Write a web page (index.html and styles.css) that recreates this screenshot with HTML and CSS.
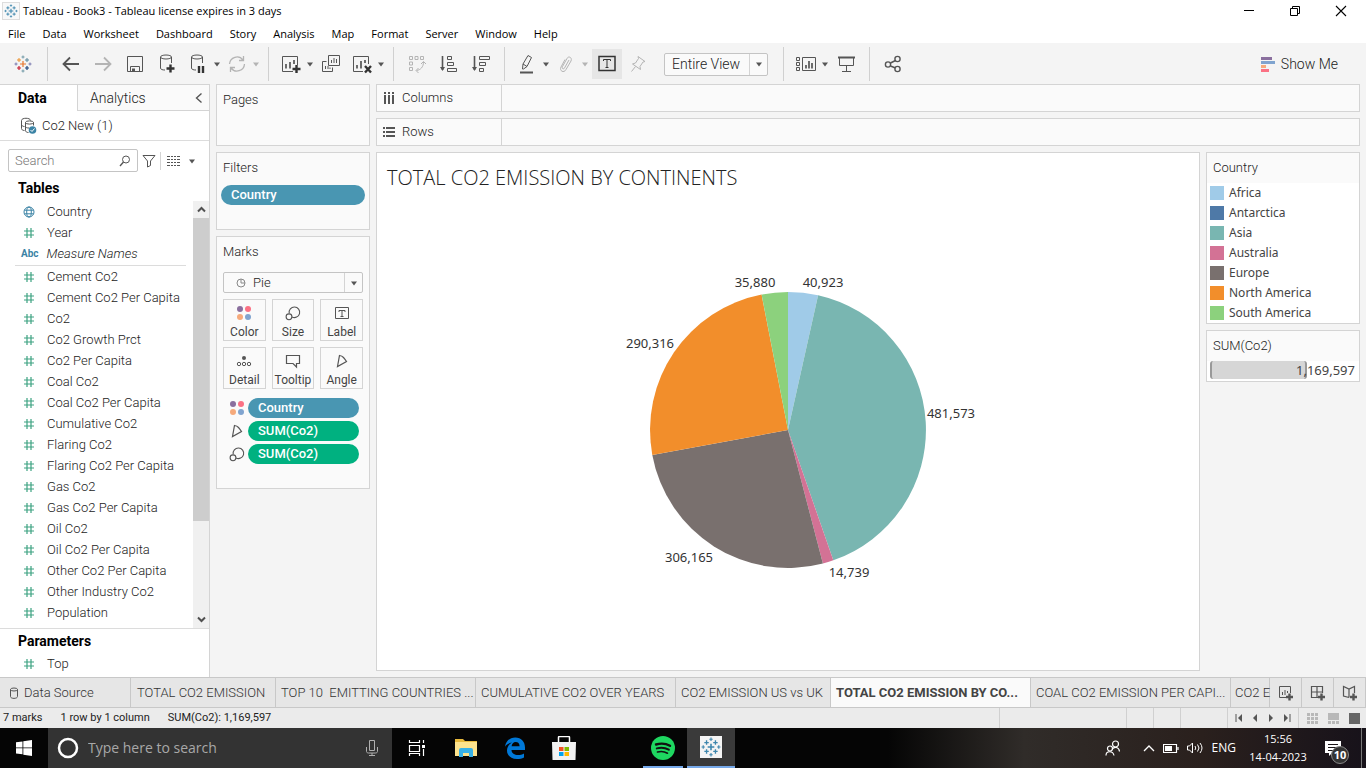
FILE: index.html
```
<!DOCTYPE html>
<html lang="en">
<head>
<meta charset="utf-8">
<title>Tableau - Book3</title>
<link rel="stylesheet" href="styles.css">
</head>
<body>
<svg class="sprite" aria-hidden="true">
  <symbol id="caret" viewBox="0 0 8 8"><path d="M1 2.5h6L4 6.5z" fill="currentColor"/></symbol>
  <symbol id="hash" viewBox="0 0 12 12"><path d="M4 1v10M8 1v10M1 4h10M1 8h10" fill="none" stroke="#3da281" stroke-width="1.2"/></symbol>
  <symbol id="logo" viewBox="0 0 18 18">
    <path d="M9 6v6M6 9h6" stroke="#e8762d" stroke-width="1.2"/>
    <path d="M5 3v4M3 5h4" stroke="#eb912c"/>
    <path d="M13 3v4M11 5h4" stroke="#5b879b"/>
    <path d="M5 11v4M3 13h4" stroke="#c72035" stroke-width="1.2"/>
    <path d="M13 11v4M11 13h4" stroke="#1f457e" stroke-width="1.2"/>
    <path d="M9 .5v3M7.500 2h3M9 14.500v3M7.500 16h3" stroke="#7199a6"/>
    <path d="M2 7.500v3M.5 9h3M16 7.500v3M14.500 9h3" stroke="#7a7ab0"/>
  </symbol>
  <symbol id="logo-blue" viewBox="0 0 18 18">
    <g stroke="#3d86ad"><path d="M9 6v6M6 9h6" stroke-width="1.4"/>
    <path d="M5 3v4M3 5h4M13 3v4M11 5h4M5 11v4M3 13h4M13 11v4M11 13h4" stroke-width="1.2"/>
    <path d="M9 .5v3M7.500 2h3M9 14.500v3M7.500 16h3M2 7.500v3M.5 9h3M16 7.500v3M14.500 9h3"/></g>
  </symbol>
  <symbol id="dots" viewBox="0 0 16 16"><circle cx="4" cy="4" r="3" fill="#8a6f9e"/><circle cx="12" cy="4" r="3" fill="#fb7184"/><circle cx="4" cy="12" r="3" fill="#f6aa7c"/><circle cx="12" cy="12" r="3" fill="#80a4cf"/></symbol>
  <symbol id="size" viewBox="0 0 16 16"><g fill="none" stroke="#555" stroke-width="1.1"><path d="M4.200 8.300A5.300 5.300 0 1 1 7 12"/><circle cx="4" cy="11.800" r="2.900"/></g></symbol>
  <symbol id="angle" viewBox="0 0 16 16"><path d="M3.500 13.500L5.500 2.500Q8 2.800 9.500 4.500T12.500 8.500z" fill="none" stroke="#555" stroke-width="1.2"/></symbol>
  <symbol id="letter" viewBox="0 0 16 16"><path d="M1.500 2.500h13v11h-13z" fill="none" stroke="#555"/><path d="M5 7V5.500h6V7M8 5.500v6M6.500 11.500h3" fill="none" stroke="#555"/></symbol>
</svg>

<header class="titlebar">
  <span class="app-icon"><svg width="14" height="14"><use href="#logo-blue"/></svg></span>
  <h1 class="window-title">Tableau - Book3 - Tableau license expires in 3 days</h1>
  <div class="window-buttons">
    <button aria-label="Minimize"><svg width="12" height="12" viewBox="0 0 12 12"><path d="M1 5.500h10" stroke="#000"/></svg></button>
    <button aria-label="Restore"><svg width="12" height="12" viewBox="0 0 12 12"><path d="M1.500 3.500h7v7h-7zM3.500 3.500v-2h7v7h-2" fill="none" stroke="#000"/></svg></button>
    <button aria-label="Close"><svg width="12" height="12" viewBox="0 0 12 12"><path d="M1 1l10 10M11 1L1 11" stroke="#000" stroke-width="1.1"/></svg></button>
  </div>
</header>

<nav class="menubar">
  <button>File</button><button>Data</button><button>Worksheet</button><button>Dashboard</button><button>Story</button><button>Analysis</button><button>Map</button><button>Format</button><button>Server</button><button>Window</button><button>Help</button>
</nav>

<div class="toolbar">
  <button class="tool start-page" aria-label="Start page"><svg width="18" height="18"><use href="#logo"/></svg></button>
  <i class="sep"></i>
  <button class="tool" aria-label="Undo"><svg viewBox="0 0 22 22"><path d="M19 11H4M10 4.500L3.500 11l6.500 6.500" stroke-width="1.800"/></svg></button>
  <button class="tool faded" aria-label="Redo"><svg viewBox="0 0 22 22"><path d="M3 11h15M12 4.500l6.500 6.500-6.500 6.500" stroke-width="1.800"/></svg></button>
  <button class="tool" aria-label="Save"><svg viewBox="0 0 22 22"><path d="M3.500 3.500h15v15h-15zM6.500 18.500v-5h9v5"/><path d="M8 15.500h3v3H8z" fill="currentColor" stroke="none"/></svg></button>
  <button class="tool" aria-label="New data source"><svg viewBox="0 0 22 22"><path d="M4.500 4v11c0 1.500 2 2 4.500 2M15.500 4v6"/><ellipse cx="10" cy="4" rx="5.500" ry="2"/><path d="M14.500 11.500v8M10.500 15.500h8" class="heavy"/></svg></button>
  <button class="tool wide" aria-label="Pause updates"><svg viewBox="0 0 22 22"><path d="M4.500 4v11c0 1.500 2 2 4.500 2M15.500 4v6"/><ellipse cx="10" cy="4" rx="5.500" ry="2"/><path d="M12 13v7M16 13v7" class="heavy"/></svg><svg class="caret"><use href="#caret"/></svg></button>
  <button class="tool wide faded" aria-label="Run update"><svg viewBox="0 0 22 22"><path d="M3.500 11A7.500 7.500 0 0 1 17 7M18.500 11A7.500 7.500 0 0 1 5 15M17.500 3v4.500H13M4.500 19v-4.500H9" stroke-width="1.300"/></svg><svg class="caret"><use href="#caret"/></svg></button>
  <i class="sep"></i>
  <button class="tool wide" aria-label="New worksheet"><svg viewBox="0 0 22 22"><path d="M13 18.500H2.500v-15h15V12"/><path d="M6 11v4.500M10 9v6.500M14 7v4" stroke-width="1.700"/><path d="M16.500 12v8M12.500 16h8" class="heavy"/></svg><svg class="caret"><use href="#caret"/></svg></button>
  <button class="tool" aria-label="Duplicate"><svg viewBox="0 0 22 22"><path d="M8.500 2.500h11v10h-11zM6.500 8.500h-4v10h10v-4M11.500 7v3M14 5v5M16.500 6v4M5.500 13v3M8 13v3M10 14.500v1.500"/></svg></button>
  <button class="tool wide" aria-label="Clear sheet"><svg viewBox="0 0 22 22"><path d="M12 18.500H2.500v-15h15V11"/><path d="M6 12v3.500M10 8v7.500M14 7v3" stroke-width="1.700"/><path d="M14 13l6 6.500M20 13l-6 6.500" class="heavy"/></svg><svg class="caret"><use href="#caret"/></svg></button>
  <i class="sep"></i>
  <button class="tool faded" aria-label="Swap rows and columns"><svg viewBox="0 0 22 22"><path d="M3.500 3.500h3v3h-3zM9 3.500h3v3H9zM14.500 3.500h3v3h-3zM3.500 9h3v3h-3zM3.500 14.500h3v3h-3zM17.500 9c0 5-3 8-7 8.500M15 11l2.500-2.500L20 11M12.500 15l-2.500 2.500 2.500 2.500"/></svg></button>
  <button class="tool" aria-label="Sort ascending"><svg viewBox="0 0 22 22"><path d="M4.500 3v14" stroke-width="1.600"/><path d="M2 14h5l-2.500 4z" fill="currentColor" stroke="none"/><path d="M9.500 3.500h4v3h-4zM9.500 9.500h6v3h-6zM9.500 15.500h9v3h-9z"/></svg></button>
  <button class="tool" aria-label="Sort descending"><svg viewBox="0 0 22 22"><path d="M4.500 3v14" stroke-width="1.600"/><path d="M2 14h5l-2.500 4z" fill="currentColor" stroke="none"/><path d="M9.500 3.500h10v3h-10zM9.500 9.500h6v3h-6zM9.500 15.500h4v3h-4z"/></svg></button>
  <i class="sep"></i>
  <button class="tool wide" aria-label="Highlight"><svg viewBox="0 0 22 22"><path d="M7 11L12 2.500l3.500 2L11 13.500l-3.500 2.500-1 0zM7 11l4 2.500"/><path d="M4 19.500h13" stroke-width="2"/></svg><svg class="caret"><use href="#caret"/></svg></button>
  <button class="tool wide faded" aria-label="Group members"><svg viewBox="0 0 22 22"><path d="M14 7l-4.500 8c-1 2-3 .5-2-1.500L12 5.500c1.500-3 5.500-1 4 2.500l-5 8.500c-2 4-7 1.500-5-2.500L10 6.500"/></svg><svg class="caret"><use href="#caret"/></svg></button>
  <button class="tool pressed" aria-label="Show mark labels"><svg viewBox="0 0 22 22"><path d="M3 3.500h16v14H3z" stroke-width="1.500"/><path d="M7.500 8V6.500h7V8M11 6.500v8M9.500 14.500h3"/></svg></button>
  <button class="tool faded" aria-label="Fix axes"><svg viewBox="0 0 22 22"><path d="M11 3.500l7 5-2 .5-3 4.500.5 3-8-5.500 3-1 3-4.500zM8.500 13.500l-4 5"/></svg></button>
  <label class="select fit"><select aria-label="Fit"><option>Entire View</option></select><span class="drop"><svg class="caret"><use href="#caret"/></svg></span></label>
  <i class="sep"></i>
  <button class="tool wide" aria-label="Show or hide cards"><svg viewBox="0 0 22 22"><path d="M7.500 4.500h13v13h-13zM1.500 4.500h3v3h-3zM1.500 9.500h3v3h-3zM1.500 14.500h3v3h-3z"/><path d="M11 12v3.500M14 8v7.500M17 10v5.500" stroke-width="1.700"/></svg><svg class="caret"><use href="#caret"/></svg></button>
  <button class="tool" aria-label="Presentation mode"><svg viewBox="0 0 22 22"><path d="M3 4.500h17" stroke-width="2"/><path d="M4.500 4.500v8h14v-8M11.500 12.500v6M7 18.500h9"/></svg></button>
  <i class="sep"></i>
  <button class="tool" aria-label="Share"><svg viewBox="0 0 22 22"><g stroke-width="1.400"><circle cx="6" cy="11.500" r="2.600"/><circle cx="15.500" cy="6" r="2.600"/><circle cx="15.500" cy="16" r="2.600"/><path d="M8.500 10l5-2.500M8.500 13l5 2"/></g></svg></button>
  <button class="show-me"><svg width="16" height="16" viewBox="0 0 16 16"><path d="M1 1h11v3H1z" fill="#8a6f9e"/><path d="M1 5h14v3H1z" fill="#80a4cf"/><path d="M1 9h5v3H1z" fill="#f6aa7c"/><path d="M1 13h8v3H1z" fill="#fb7184"/></svg>Show Me</button>
</div>

<main class="workspace">
  <aside class="data-pane">
    <div class="pane-tabs"><button class="active">Data</button><button>Analytics<svg width="8" height="12" viewBox="0 0 8 12"><path d="M6.500 1.500L1.500 6l5 4.500" fill="none" stroke="#555" stroke-width="1.400"/></svg></button></div>
    <div class="source"><svg width="18" height="18" viewBox="0 0 18 18"><g fill="none" stroke="#555"><path d="M1.500 3.500v8c0 1 1 2 3 2M1.500 3.500c0-3 9-3 9 0M1.500 7.500c0 1 1 2 3 2"/><ellipse cx="9.500" cy="5.500" rx="4" ry="1.600"/><path d="M5.500 5.500v8c0 1 1 2 3 2M13.500 5.500v3M5.500 9.500c0 1 1.500 1.500 3.500 1.500"/></g><circle cx="12.500" cy="13" r="3.800" fill="#3b83a5"/><path d="M10.500 13l1.500 1.500 2.500-3" fill="none" stroke="#fff"/></svg>Co2 New (1)</div>
    <div class="find">
      <label class="search"><input type="text" placeholder="Search" aria-label="Search"><svg width="12" height="12" viewBox="0 0 12 12"><circle cx="7" cy="4.500" r="3.500" fill="none" stroke="#555"/><path d="M4.500 7L1 11" stroke="#555" stroke-width="1.400"/></svg></label>
      <button aria-label="Filter fields"><svg width="14" height="14" viewBox="0 0 14 14"><path d="M1 1.500h12L8.500 7v4.500l-3 1.500V7z" fill="none" stroke="#555"/></svg></button>
      <button class="view-list" aria-label="View"><svg width="13" height="12" viewBox="0 0 13 12"><path d="M0 1.500h13M0 4.500h13M0 7.500h13M0 10.500h13" stroke="#555" stroke-dasharray="3 1 2 1 2 1 3 0"/></svg><svg class="caret"><use href="#caret"/></svg></button>
    </div>
    <h2>Tables</h2>
    <div class="fields">
      <ul>
        <li><svg viewBox="0 0 12 12"><g fill="none" stroke="#3b83a5"><circle cx="6" cy="6" r="5"/><ellipse cx="6" cy="6" rx="2.300" ry="5"/><path d="M1.500 4.200h9M1.500 7.800h9"/></g></svg>Country</li>
        <li><svg><use href="#hash"/></svg>Year</li>
        <li class="names"><b>Abc</b><em>Measure Names</em></li>
        <li class="first-measure"><svg><use href="#hash"/></svg>Cement Co2</li>
        <li><svg><use href="#hash"/></svg>Cement Co2 Per Capita</li>
        <li><svg><use href="#hash"/></svg>Co2</li>
        <li><svg><use href="#hash"/></svg>Co2 Growth Prct</li>
        <li><svg><use href="#hash"/></svg>Co2 Per Capita</li>
        <li><svg><use href="#hash"/></svg>Coal Co2</li>
        <li><svg><use href="#hash"/></svg>Coal Co2 Per Capita</li>
        <li><svg><use href="#hash"/></svg>Cumulative Co2</li>
        <li><svg><use href="#hash"/></svg>Flaring Co2</li>
        <li><svg><use href="#hash"/></svg>Flaring Co2 Per Capita</li>
        <li><svg><use href="#hash"/></svg>Gas Co2</li>
        <li><svg><use href="#hash"/></svg>Gas Co2 Per Capita</li>
        <li><svg><use href="#hash"/></svg>Oil Co2</li>
        <li><svg><use href="#hash"/></svg>Oil Co2 Per Capita</li>
        <li><svg><use href="#hash"/></svg>Other Co2 Per Capita</li>
        <li><svg><use href="#hash"/></svg>Other Industry Co2</li>
        <li><svg><use href="#hash"/></svg>Population</li>
      </ul>
      <div class="scrollbar"><button aria-label="Scroll up"><svg width="9" height="9" viewBox="0 0 9 9"><path d="M1 6.500L4.500 3 8 6.500" fill="none" stroke="#505050" stroke-width="2"/></svg></button><div class="track"><div class="thumb"></div></div><button aria-label="Scroll down"><svg width="9" height="9" viewBox="0 0 9 9"><path d="M1 2.500L4.500 6 8 2.500" fill="none" stroke="#505050" stroke-width="2"/></svg></button></div>
    </div>
    <div class="parameters"><h2>Parameters</h2><ul><li><svg><use href="#hash"/></svg>Top</li></ul></div>
  </aside>

  <aside class="cards">
    <section class="card pages"><h3>Pages</h3></section>
    <section class="card filters"><h3>Filters</h3><button class="pill">Country</button></section>
    <section class="card marks"><h3>Marks</h3>
      <label class="select mark-type"><svg width="10" height="10" viewBox="0 0 10 10"><path d="M5 1a4 4 0 1 0 4 4M5 1v4h4A4 4 0 0 0 5 1" fill="none" stroke="#888"/></svg><select aria-label="Mark type"><option>Pie</option></select><span class="drop"><svg class="caret"><use href="#caret"/></svg></span></label>
      <div class="mark-grid">
        <button><svg><use href="#dots"/></svg>Color</button>
        <button><svg><use href="#size"/></svg>Size</button>
        <button><svg><use href="#letter"/></svg>Label</button>
        <button><svg viewBox="0 0 16 16"><circle cx="8" cy="5" r="2" fill="#555"/><g fill="none" stroke="#555"><circle cx="3" cy="11" r="1.700"/><circle cx="8" cy="11" r="1.700"/><circle cx="13" cy="11" r="1.700"/></g></svg>Detail</button>
        <button><svg viewBox="0 0 16 16"><path d="M1.500 2.500h13v8h-3v3.500L8 10.500H1.500z" fill="none" stroke="#555" stroke-width="1.200"/></svg>Tooltip</button>
        <button><svg><use href="#angle"/></svg>Angle</button>
      </div>
      <div class="mark-row"><svg><use href="#dots"/></svg><button class="pill">Country</button></div>
      <div class="mark-row"><svg><use href="#angle"/></svg><button class="pill green">SUM(Co2)</button></div>
      <div class="mark-row"><svg><use href="#size"/></svg><button class="pill green">SUM(Co2)</button></div>
    </section>
  </aside>

  <div class="stage">
    <div class="shelf"><span class="shelf-name"><svg width="12" height="12" viewBox="0 0 12 12"><path d="M2 0v2M6 0v2M10 0v2M2 3v9M6 3v9M10 3v9" stroke="#555" stroke-width="2"/></svg>Columns</span></div>
    <div class="shelf"><span class="shelf-name"><svg width="12" height="12" viewBox="0 0 12 12"><path d="M0 2h2M0 6h2M0 10h2M3 2h9M3 6h9M3 10h9" stroke="#555" stroke-width="2"/></svg>Rows</span></div>
    <div class="canvas">
      <section class="sheet">
        <h2>TOTAL CO2 EMISSION BY CONTINENTS</h2>
        <div class="plot">
          <svg class="pie" width="360" height="320" viewBox="-180 -160 360 320" role="img" aria-label="Pie chart of CO2 emission by continent">
            <path fill="#a0cbe8" d="M0 0V-138A138 138 0 0 1 30.100-134.700z"/>
            <path fill="#79b6b1" d="M0 0L30.100-134.700A138 138 0 0 1 45.300 130.300z"/>
            <path fill="#d37295" d="M0 0L45.300 130.300A138 138 0 0 1 34.900 133.500z"/>
            <path fill="#79706e" d="M0 0L34.900 133.500A138 138 0 0 1-135.700 24.900z"/>
            <path fill="#f28e2b" d="M0 0L-135.700 24.900A138 138 0 0 1-26.400-135.400z"/>
            <path fill="#8cd17d" d="M0 0L-26.400-135.400A138 138 0 0 1 0-138z"/>
            <g class="pie-labels">
              <text x="-33" y="-143">35,880</text><text x="35" y="-143">40,923</text><text x="-138" y="-82">290,316</text><text x="163" y="-12">481,573</text><text x="-99" y="132">306,165</text><text x="61" y="147">14,739</text>
            </g>
          </svg>
        </div>
      </section>
      <aside class="legends">
        <section class="legend"><h3>Country</h3>
          <ul>
            <li><i class="africa"></i>Africa</li><li><i class="antarctica"></i>Antarctica</li><li><i class="asia"></i>Asia</li><li><i class="australia"></i>Australia</li><li><i class="europe"></i>Europe</li><li><i class="north"></i>North America</li><li><i class="south"></i>South America</li>
          </ul>
        </section>
        <section class="legend"><h3>SUM(Co2)</h3><div class="size-legend"><i></i><span>1,169,597</span></div></section>
      </aside>
    </div>
  </div>
</main>

<nav class="sheets">
  <button class="data-source"><svg width="10" height="12" viewBox="0 0 10 12"><path d="M1.500 2.500v7c0 2.500 7 2.500 7 0v-7" fill="none" stroke="#555"/><ellipse cx="5" cy="2.500" rx="3.500" ry="1.500" fill="none" stroke="#555"/></svg>Data Source</button>
  <button class="s2">TOTAL CO2 EMISSION</button>
  <button class="s3">TOP 10&nbsp; EMITTING COUNTRIES ...</button>
  <button class="s3">CUMULATIVE CO2 OVER YEARS</button>
  <button class="s4">CO2 EMISSION US vs UK</button>
  <button class="s3 current">TOTAL CO2 EMISSION BY CO...</button>
  <button class="s3">COAL CO2 EMISSION PER CAPI...</button>
  <button class="clipped">CO2 E</button>
  <button class="new" aria-label="New worksheet"><svg viewBox="0 0 18 18"><path d="M9 13.500H2.500v-11h11V9M5.500 8v3M8 6v5M10.500 7v2"/><path d="M12.500 9.500v7M9 13h7" class="heavy"/></svg></button>
  <button class="new" aria-label="New dashboard"><svg viewBox="0 0 18 18"><path d="M9 13.500H2.500v-11h11V9M2.500 8h11M8 2.500v11" stroke-width="1.200"/><path d="M12.500 9.500v7M9 13h7" class="heavy"/></svg></button>
  <button class="new" aria-label="New story"><svg viewBox="0 0 18 18"><path d="M8 13.500l-5.500-1.500V2.500L8 5l5.500-2.500V9M8 5v8.500" stroke-width="1.200"/><path d="M12.500 9.500v7M9 13h7" class="heavy"/></svg></button>
</nav>

<footer class="status">
  <span>7 marks</span><span>1 row by 1 column</span><span>SUM(Co2): 1,169,597</span>
  <div class="status-cells"><i class="c1"></i><i class="c2"></i><i class="c2"></i><i class="c3"></i></div>
  <div class="nav">
    <button aria-label="First sheet"><svg viewBox="0 0 8 8"><path d="M1 0v8" stroke="#555"/><path d="M7 0v8L3 4z" fill="#555"/></svg></button>
    <button aria-label="Previous sheet"><svg viewBox="0 0 8 8"><path d="M6 0v8L2 4z" fill="#555"/></svg></button>
    <button aria-label="Next sheet"><svg viewBox="0 0 8 8"><path d="M2 0v8l4-4z" fill="#555"/></svg></button>
    <button aria-label="Last sheet"><svg viewBox="0 0 8 8"><path d="M7 0v8" stroke="#555"/><path d="M1 0v8l4-4z" fill="#555"/></svg></button>
  </div>
  <div class="views">
    <button aria-label="Sheet sorter"><svg viewBox="0 0 11 11"><path d="M0 1.500h11M0 5.500h11M0 9.500h11" stroke="#b8b8b8" stroke-width="3" stroke-dasharray="3 1"/></svg></button>
    <button aria-label="Filmstrip"><svg viewBox="0 0 11 11"><path d="M0 0h11v7H0z" fill="#b8b8b8"/><path d="M0 9.500h11" stroke="#b8b8b8" stroke-width="3" stroke-dasharray="3 1"/></svg></button>
    <button aria-label="Tabs"><svg viewBox="0 0 11 11"><path d="M0 0h11v11H0z" fill="#666"/></svg></button>
  </div>
</footer>

<div class="taskbar">
  <button class="start" aria-label="Start"><svg width="16" height="16" viewBox="0 0 16 16"><path d="M0 2.300L6.500 1.400v6H0zM7.300 1.300L16 0v7.400H7.300zM0 8.300h6.500v6L0 13.500zM7.300 8.300H16V16l-8.700-1.300z" fill="#fff"/></svg></button>
  <label class="cortana"><svg width="22" height="22" viewBox="0 0 22 22"><circle cx="11" cy="11" r="9" fill="none" stroke="#fff" stroke-width="2.500"/></svg><input type="text" placeholder="Type here to search" aria-label="Type here to search"><svg width="14" height="18" viewBox="0 0 14 18"><path d="M4.500 1.500h5v10h-5zM1.500 8v4.500c0 1 1 1.500 2 1.500h7c1 0 2-.5 2-1.500V8M7 14v2.500M4 16.500h6" fill="none" stroke="#b0b0b0"/></svg></label>
  <button class="app" aria-label="Task view"><svg width="18" height="16" viewBox="0 0 18 16"><path d="M1.500 0v2.500h10V0M1.500 5.500h10v6h-10zM1.500 16v-2.500h10V16M15.500 0v3M15.500 9v7" fill="none" stroke="#fff" stroke-width="1.200"/><path d="M14 5h3v3h-3z" fill="#fff"/></svg></button>
  <button class="app" aria-label="File Explorer"><svg width="22" height="20" viewBox="0 0 22 20"><path d="M0 1h8l2 2h12v15H0z" fill="#e8b93c"/><path d="M0 4h22v14H0z" fill="#fde38d"/><path d="M4 19v-7q0-2 2-2h10q2 0 2 2v7h-4v-4H8v4z" fill="#38b1e6"/></svg></button>
  <button class="app" aria-label="Edge"><svg width="22" height="22" viewBox="0 0 22 22"><path d="M1 9.800C1.800 4 6 .5 11.200.5 17.500.5 21 5 21 10.500V13H7.500c0 3.500 3.200 5 6.500 5 2.200 0 4.200-.6 6-1.600v4.100c-2 1-4.300 1.500-7 1.500C7 22 3 18.500 3 13.500c0-3.500 2-6.400 5-8C4.800 6 2.500 7.500 1 9.800zM7.600 9.300h8c0-2.800-1.600-4.300-3.900-4.300s-3.800 1.700-4.100 4.300z" fill="#0078d7"/></svg></button>
  <button class="app" aria-label="Store"><svg width="24" height="24" viewBox="0 0 24 24"><path d="M6.500 7V1.500q0-1 1-1h9q1 0 1 1V7" fill="none" stroke="#fff" stroke-width="1.500"/><path d="M0 6h24l-.5 18H.5z" fill="#f2f2f2"/><path d="M7 11h4.500v4H7z" fill="#f25022"/><path d="M12.500 11H17v4h-4.500z" fill="#7fba00"/><path d="M7 16h4.500v4H7z" fill="#00a4ef"/><path d="M12.500 16H17v4h-4.500z" fill="#ffb900"/></svg></button>
  <button class="app running spotify" aria-label="Spotify"><svg width="24" height="24" viewBox="0 0 24 24"><circle cx="12" cy="12" r="12" fill="#1ed760"/><g fill="none" stroke="#111" stroke-linecap="round"><path d="M5 8.500c5-1.500 10-1 14 1.300" stroke-width="2.400"/><path d="M5.800 12.400c4-1.200 8.400-.7 12 1.300" stroke-width="2"/><path d="M6.500 16c3.500-.9 7-.5 10 1.200" stroke-width="1.600"/></g></svg></button>
  <button class="app active-app" aria-label="Tableau"><span><svg width="20" height="20"><use href="#logo-blue"/></svg></span></button>
  <div class="tray">
    <button aria-label="People"><svg width="16" height="16" viewBox="0 0 16 16"><g fill="none" stroke="#fff" stroke-width="1.200"><circle cx="10.500" cy="4" r="3"/><path d="M7 9.500c2-3 7-3 7.500 2"/><circle cx="5" cy="8.500" r="2.500"/><path d="M1 15.500c0-5 7-5 8 0"/></g></svg></button>
    <button class="chevron" aria-label="Hidden icons"><svg width="12" height="8" viewBox="0 0 12 8"><path d="M1 7l5-5 5 5" fill="none" stroke="#fff" stroke-width="1.300"/></svg></button>
    <button aria-label="Battery"><svg width="16" height="10" viewBox="0 0 16 10"><path d="M.5 1.500h13v8H.5zM15 4v3" fill="none" stroke="#fff" stroke-width="1.200"/><path d="M2 3h7v5H2z" fill="#fff"/></svg></button>
    <button aria-label="Volume"><svg width="16" height="14" viewBox="0 0 16 14"><path d="M.5 5h2l3-3v10l-3-3h-2zM8 5q1.500 2 0 4M10.500 3.500q3 3.500 0 7M13 2q4 5 0 10" fill="none" stroke="#fff"/></svg></button>
    <button class="language">ENG</button>
    <button class="clock"><span>15:56</span><span>14-04-2023</span></button>
    <button class="notify" aria-label="Notifications"><svg width="16" height="15" viewBox="0 0 16 15"><path d="M0 0h16v12H7l-3 3v-3H0z" fill="#fff"/><path d="M3 3.500h10M3 6.500h10M3 9.500h6" stroke="#1b1518"/></svg><b>10</b></button>
    <button class="peek" aria-label="Show desktop"></button>
  </div>
</div>
</body>
</html>
```
FILE: styles.css
```
* { box-sizing: border-box; }
body {
  margin: 0;
  min-height: 100vh;
  display: flex;
  flex-direction: column;
  background: #f4f4f4;
  color: #222;
  font: 300 13px/20px Roboto, "Liberation Sans", sans-serif;
}
button, input, select { font: inherit; color: inherit; background: none; border: 0; padding: 0; margin: 0; }
button { display: flex; align-items: center; white-space: nowrap; }
ul { list-style: none; margin: 0; padding: 0; }
h1, h2, h3 { margin: 0; font: inherit; }
svg { display: block; flex: none; }
.sprite { display: none; }
.caret { width: 8px; height: 8px; color: #555; }

/* Title bar and menus */
.titlebar { display: flex; align-items: center; height: 22px; padding-left: 2px; background: #fff; color: #000; }
.app-icon { padding: 1px; border: 1px solid #ddd; background: #f8f8f8; }
.window-title { margin-left: 3px; font: 11px/20px "Open Sans", sans-serif; }
.window-buttons { display: flex; margin-left: auto; padding-right: 2px; }
.window-buttons button { width: 46px; height: 22px; justify-content: center; }
.menubar { display: flex; gap: 17px; height: 21px; padding: 2px 0 0 8px; background: #fff; color: #000; font: 11px/19px "Open Sans", sans-serif; }

/* Toolbar */
.toolbar { display: flex; align-items: center; height: 41px; padding-top: 1px; }
.toolbar .sep { width: 1px; height: 34px; margin: 0 7px; background: #d0d0d0; }
.tool { width: 32px; height: 30px; justify-content: center; color: #555; }
.tool svg { width: 22px; height: 22px; fill: none; stroke: currentColor; }
.start-page { width: 34px; margin-left: 6px; }
.start-page svg { width: 18px; height: 18px; }
.tool .caret { width: 8px; height: 8px; color: inherit; stroke: none; }
.tool.wide { width: 39px; padding-left: 4px; gap: 4px; justify-content: flex-start; }
.tool.faded { color: #b4b4b4; }
.tool.pressed { width: 30px; margin-left: 2px; background: #e6e6e6; color: #333; }
.tool .heavy { stroke: #333; }
.heavy { stroke-width: 2.4; }
.select { display: flex; align-items: center; border: 1px solid #c4c4c4; border-radius: 2px; background: #fafafa; }
.select select { flex: 1; min-width: 0; appearance: none; outline: 0; }
.drop { display: grid; place-items: center; width: 18px; align-self: stretch; border-left: 1px solid #d4d4d4; }
.fit { width: 104px; height: 23px; margin: 0 8px 0 10px; padding-left: 7px; font-size: 14px; }
.show-me { gap: 5px; margin-left: auto; margin-right: 28px; font-size: 14px; }

/* Data pane */
.workspace { flex: 1; display: flex; gap: 6px; padding-right: 6px; }
.data-pane { width: 210px; flex: none; display: flex; flex-direction: column; background: #fff; border: solid #d4d4d4; border-width: 1px 1px 0 0; }
.pane-tabs { display: flex; height: 26px; font-size: 14px; }
.pane-tabs button { flex: 1; justify-content: space-between; padding: 0 6px 0 12px; border-left: 1px solid #d4d4d4; border-bottom: 1px solid #d4d4d4; background: #fafafa; }
.pane-tabs .active { flex: none; width: 77px; padding-left: 18px; border: 0; background: #fff; color: #000; font-weight: 700; }
.source { display: flex; align-items: center; gap: 4px; height: 30px; padding-left: 20px; border-bottom: 1px solid #dcdcdc; }
.find { display: flex; align-items: center; gap: 4px; padding: 8px 8px 0; }
.search { display: flex; align-items: center; width: 130px; height: 23px; padding: 0 6px; border: 1px solid #c4c4c4; border-radius: 2px; }
.search input { flex: 1; min-width: 0; outline: 0; }
.search input::placeholder { color: #777; }
.view-list { gap: 8px; height: 18px; padding-left: 6px; border-left: 1px solid #d4d4d4; }
.data-pane h2 { padding-left: 18px; color: #000; font-size: 14px; line-height: 24px; font-weight: 700; }
.find + h2 { margin-top: 4px; }
.fields { display: flex; flex: 1; margin-top: 1px; justify-content: space-between; border-bottom: 1px solid #dcdcdc; }
.data-pane li { display: flex; align-items: center; gap: 12px; height: 21px; padding-left: 23px; }
.data-pane li svg { width: 12px; height: 12px; }
.data-pane li b { font-size: 10px; font-weight: 700; color: #3b83a5; }
.data-pane .names { padding-left: 21px; gap: 8px; }
.first-measure { margin: 2px 0 0 15px; width: 171px; box-shadow: 0 -1px #dcdcdc; }
.data-pane .first-measure { padding-left: 8px; }
.scrollbar { display: flex; flex-direction: column; width: 16px; background: #f0f0f0; }
.scrollbar button { justify-content: center; height: 17px; }
.track { flex: 1; }
.thumb { height: 77%; background: #cdcdcd; }
.parameters { height: 48px; }

/* Cards */
.cards { width: 154px; flex: none; display: flex; flex-direction: column; gap: 6px; }
.card { border: 1px solid #d4d4d4; background: #fafafa; padding: 5px 6px; }
.pages { height: 62px; }
.filters { height: 78px; padding: 5px 4px; }
.filters h3 { padding-left: 2px; }
.marks { height: 253px; }
.pill { width: 100%; height: 20px; padding-left: 10px; border-radius: 10px; background: #4996b2; color: #fff; font-weight: 500; }
.filters .pill { margin-top: 7px; }
.green { background: #00b180; }
.mark-type { height: 21px; margin-top: 10px; padding-left: 12px; gap: 7px; }
.mark-grid { display: grid; grid-template-columns: repeat(3, 1fr); gap: 6px; margin: 6px 0 9px; font-size: 12px; font-weight: 400; }
.mark-grid button { flex-direction: column; gap: 1px; height: 42px; padding-top: 5px; border: 1px solid #d4d4d4; color: #444; }
.mark-grid svg, .mark-row svg { width: 16px; height: 16px; }
.mark-row { display: flex; align-items: center; gap: 3px; margin-bottom: 3px; padding: 0 4px 0 6px; }

/* Shelves and view */
.stage { flex: 1; min-width: 0; display: flex; flex-direction: column; gap: 6px; padding-bottom: 6px; }
.shelf { height: 28px; display: flex; border: 1px solid #d4d4d4; background: #fafafa; }
.shelf-name { display: flex; align-items: center; gap: 7px; width: 125px; padding-left: 6px; border-right: 1px solid #d4d4d4; }
.canvas { flex: 1; display: flex; gap: 6px; }
.sheet { flex: 1; display: flex; flex-direction: column; border: 1px solid #d4d4d4; background: #fff; }
.sheet h2 { padding: 11px 10px 0; font: 300 20px/28px "Open Sans", sans-serif; }
.plot { flex: 1; display: grid; place-items: center; padding-bottom: 2px; }
.pie { overflow: visible; }
.pie-labels { font: 13px "Noto Sans", sans-serif; fill: #333; text-anchor: middle; }
.legends { width: 154px; display: flex; flex-direction: column; gap: 6px; }
.legend { border: 1px solid #d4d4d4; background: #fff; }
.legend h3 { padding: 5px 6px; background: #fafafa; }
.legend ul { font: 12px/20px "Noto Sans", sans-serif; color: #444; }
.legend li { display: flex; align-items: center; gap: 5px; padding-left: 3px; }
.legend li i { width: 14px; height: 14px; }
.africa { background: #a0cbe8; }
.antarctica { background: #4e79a7; }
.asia { background: #79b6b1; }
.australia { background: #d37295; }
.europe { background: #79706e; }
.north { background: #f28e2b; }
.south { background: #8cd17d; }
.size-legend { display: grid; padding: 0 4px 2px 3px; font: 13px/18px "Noto Sans", sans-serif; color: #444; }
.size-legend i, .size-legend span { grid-area: 1 / 1; }
.size-legend i { width: 97px; border: solid #999; border-width: 0 2px; border-radius: 3px; background: #d6d6d6; }
.size-legend span { justify-self: end; }

/* Sheet tabs and status */
.sheets { display: flex; height: 31px; border: solid #c8c8c8; border-width: 1px 0; background: #e6e6e6; color: #333; }
.sheets button { flex: none; padding: 0 5px; border-right: 1px solid #c8c8c8; }
.data-source { width: 131px; gap: 5px; }
.sheets .data-source { padding-left: 9px; }
.sheets .s2 { width: 145px; padding-left: 6px; }
.s3 { width: 200px; }
.s4 { width: 155px; }
.sheets .current { background: #fafafa; color: #444; font-weight: 700; }
.sheets .clipped { flex: 1; min-width: 0; padding: 0 0 0 4px; }
.sheets .new { width: 32px; justify-content: center; }
.new svg { width: 18px; height: 18px; fill: none; stroke: #555; }
.status { display: flex; align-items: center; gap: 18px; height: 20px; padding-left: 3px; background: #ebebeb; font-size: 11px; font-weight: 400; }
.status-cells, .nav, .views { display: flex; align-self: stretch; }
.status-cells { margin-left: auto; border-left: 1px solid #d0d0d0; margin-right: -18px; }
.status-cells i { border-right: 1px solid #d0d0d0; }
.c1 { width: 127px; }
.c2 { width: 27px; }
.c3 { width: 47px; }
.nav { width: 71px; padding: 0 5px; justify-content: space-between; border-right: 1px solid #d0d0d0; }
.nav button { width: 12px; justify-content: center; }
.nav svg { width: 8px; height: 8px; }
.views { width: 67px; gap: 10px; padding-left: 8px; margin-left: -18px; }
.views svg { width: 11px; height: 11px; }

/* Windows taskbar */
.taskbar { display: flex; height: 40px; background: linear-gradient(90deg, #050505 65%, #302c29 75%, #2a201d 88%, #17121a); color: #fff; font: 12px/20px "Open Sans", sans-serif; }
.taskbar button { justify-content: center; }
.start { width: 48px; }
.cortana { display: flex; align-items: center; gap: 9px; width: 344px; padding: 0 13px 0 9px; background: #333; font-size: 14px; }
.cortana input { flex: 1; min-width: 0; outline: 0; }
.cortana input::placeholder { color: #a8a8a8; }
.app { width: 49px; }
.spotify { margin-left: 50px; }
.running { background: linear-gradient(#76a9ea, #76a9ea) center bottom / 40px 2px no-repeat; }
.active-app { width: 48px; border-bottom: 2px solid #76a9ea; background: #3a3a3a; }
.active-app span { padding: 1px; background: #f4f4f4; }
.tray { display: flex; margin-left: auto; }
.tray button { padding: 0 4px; }
.tray .chevron { padding: 0 4px 0 18px; }
.tray .language { padding: 0 6px 0 5px; }
.clock { flex-direction: column; width: 72px; font-size: 11px; line-height: 18px; }
.notify { position: relative; width: 47px; }
.tray .notify { justify-content: flex-start; padding-left: 11px; }
.notify b { position: absolute; left: 17px; top: 18px; width: 18px; height: 18px; border: 1px solid #888; border-radius: 50%; background: #333; font-size: 11px; line-height: 16px; }
.tray .peek { width: 5px; padding: 0; border-left: 1px solid #777; }
```
